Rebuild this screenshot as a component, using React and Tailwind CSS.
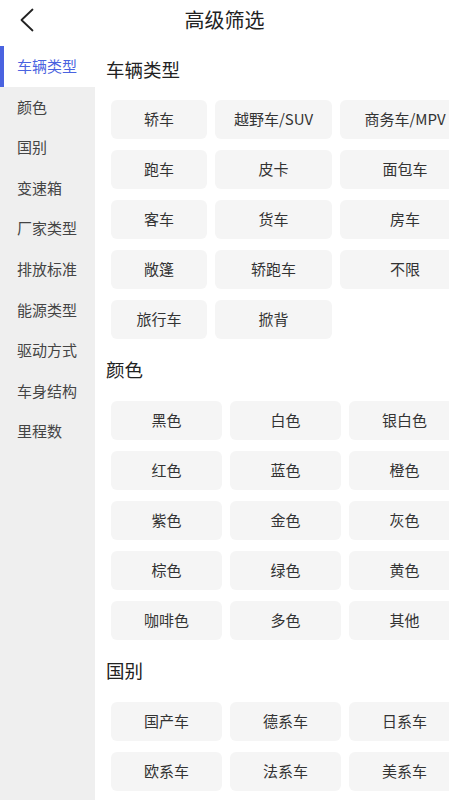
import React from 'react';

const menu = ['车辆类型', '颜色', '国别', '变速箱', '厂家类型', '排放标准', '能源类型', '驱动方式', '车身结构', '里程数'];

const sections = [
  {
    title: '车辆类型',
    cols: 'grid-cols-[96px_117px_130px]',
    items: ['轿车', '越野车/SUV', '商务车/MPV', '跑车', '皮卡', '面包车', '客车', '货车', '房车', '敞篷', '轿跑车', '不限', '旅行车', '掀背'],
  },
  {
    title: '颜色',
    cols: 'grid-cols-[111px_111px_111px]',
    items: ['黑色', '白色', '银白色', '红色', '蓝色', '橙色', '紫色', '金色', '灰色', '棕色', '绿色', '黄色', '咖啡色', '多色', '其他'],
  },
  {
    title: '国别',
    cols: 'grid-cols-[111px_111px_111px]',
    items: ['国产车', '德系车', '日系车', '欧系车', '法系车', '美系车'],
  },
];

export default function App() {
  return (
    <div className="w-[449px] h-[800px] overflow-hidden bg-white flex flex-col font-['Noto_Sans_CJK_SC','Noto_Sans',sans-serif]">
      {/* header */}
      <div className="h-[40px] shrink-0 grid grid-cols-[60px_1fr_60px] items-center">
        <div className="pl-[19px] flex items-center">
          <svg width="16" height="24" viewBox="0 0 16 24" fill="none" stroke="#222" strokeWidth="1.8" strokeLinecap="round" strokeLinejoin="round">
            <path d="M13.5 1.5 L2.5 12 L13.5 22.5" />
          </svg>
        </div>
        <div className="text-center text-[20px] text-[#222] leading-none">高级筛选</div>
        <div />
      </div>

      <div className="flex flex-1 min-h-0">
        {/* sidebar */}
        <div className="w-[95px] shrink-0 bg-[#efefef] flex flex-col">
          <div className="h-[6px] bg-white" />
          {menu.map((m, i) => (
            <div
              key={m}
              className={
                i === 0
                  ? 'h-[40.6px] flex items-center pl-[13px] text-[15px] bg-white text-[#4a63e0] border-l-4 border-[#4a63e0]'
                  : 'h-[40.6px] flex items-center pl-[17px] text-[15px] text-[#444]'
              }
            >
              {m}
            </div>
          ))}
        </div>

        {/* content */}
        <div className="flex-1 min-w-0 overflow-hidden pl-[16px]">
          {sections.map((s, si) => (
            <div key={s.title}>
              <div className={si === 0 ? 'h-[60px] flex items-center -ml-[5px] text-[18.5px] text-[#222]' : 'h-[62px] flex items-center -ml-[5px] text-[18.5px] text-[#222]'}>
                {s.title}
              </div>
              <div className={`grid ${s.cols} gap-x-[8px] gap-y-[11px]`}>
                {s.items.map((it) => (
                  <div key={it} className="h-[39px] rounded-[6px] bg-[#f5f5f5] flex items-center justify-center text-[15px] text-[#333] whitespace-nowrap">
                    {it}
                  </div>
                ))}
              </div>
            </div>
          ))}
        </div>
      </div>
    </div>
  );
}
